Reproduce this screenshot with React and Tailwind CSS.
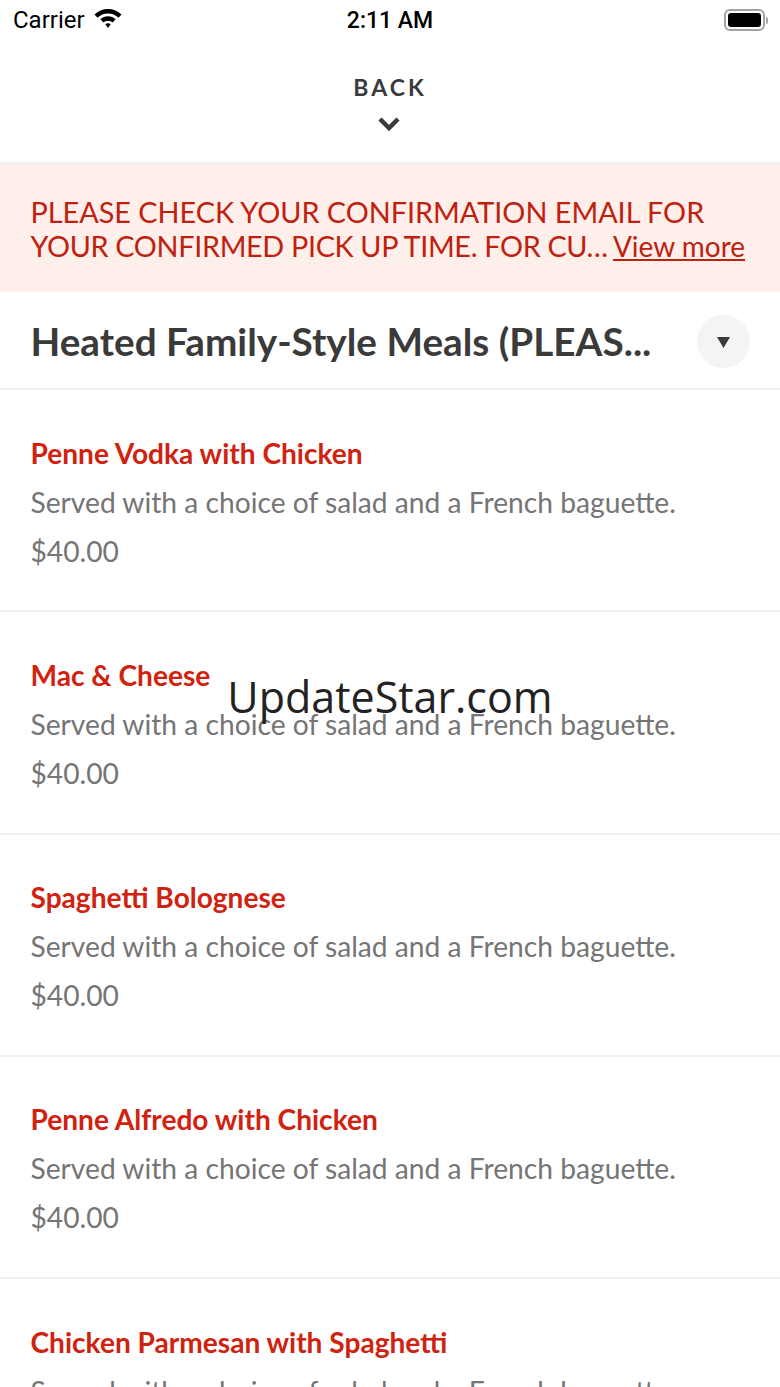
import React from 'react';

const meals = [
    'Penne Vodka with Chicken',
    'Mac & Cheese',
    'Spaghetti Bolognese',
    'Penne Alfredo with Chicken',
    'Chicken Parmesan with Spaghetti',
];

const StatusBar = () => (
    <div className="h-[40px] flex items-center justify-between pl-[13px] pr-[12px] font-['Roboto',sans-serif] text-black">
        <div className="flex items-center gap-[8px]">
            <span className="text-[24px] leading-none">Carrier</span>
            <svg className="-mt-[4px]" width="30" height="22" viewBox="0 0 30 22" fill="black">
                <path d="M15 2C9.5 2 5 4 1.500 7.500L4.500 10.800C7.300 8.100 11 6.600 15 6.600s7.700 1.500 10.500 4.200l3-3.300C25 4 20.500 2 15 2z" />
                <path d="M15 9.200c-3 0-5.600 1.100-7.600 3l3 3.300c1.200-1.100 2.800-1.800 4.600-1.800s3.400.7 4.600 1.800l3-3.300c-2-1.900-4.600-3-7.600-3z" />
                <path d="M15 16.200c-1.100 0-2 .4-2.700 1L15 21l2.700-3.800c-.7-.6-1.600-1-2.700-1z" />
            </svg>
        </div>
        <span className="absolute left-0 right-0 text-center text-[23px] leading-none font-medium">2:11 AM</span>
        <div className="flex items-center">
            <div className="w-[41px] h-[22px] rounded-[6px] border-2 border-[#a3a3a3] p-[2px]">
                <div className="w-full h-full rounded-[3px] bg-black" />
            </div>
            <div className="w-[2px] h-[7px] bg-[#a3a3a3] rounded-r-sm ml-[1px]" />
        </div>
    </div>
);

const MealRow = ({ name }) => (
    <div className="h-[222.25px] border-b-2 border-[#f1f1f1] pt-[43.500px] px-[30.500px] shrink-0">
        <div className="text-[28.100px] leading-[38px] font-bold text-[#d0220f]">{name}</div>
        <div className="text-[28.200px] leading-[38px] mt-[11px] text-[#757575]">Served with a choice of salad and a French baguette.</div>
        <div className="text-[28.200px] leading-[38px] mt-[11px] text-[#757575]">$40.00</div>
    </div>
);

export default function App() {
    return (
        <div className="relative w-[780px] h-[1387px] overflow-hidden bg-white font-['Lato',sans-serif]">
            <StatusBar />
            <div className="h-[124px] flex flex-col items-center pt-[33px] border-b-2 border-[#f1f1f1] text-[#3a3a3a]">
                <span className="text-[23px] leading-[28px] font-bold tracking-[3px]">BACK</span>
                <svg className="mt-[15px] -ml-[2px]" width="24" height="16" viewBox="0 0 24 16" fill="none" stroke="#3a3a3a" strokeWidth="4.5">
                    <path d="M3 3l9 9 9-9" />
                </svg>
            </div>
            <div className="h-[128px] bg-[#ffefeb] px-[30.500px] pt-[30.500px] text-[28.800px] leading-[34px] text-[#c0200e]">
                <div>PLEASE CHECK YOUR CONFIRMATION EMAIL FOR</div>
                <div className="whitespace-nowrap flex">
                    <span className="tracking-[-0.33px]">YOUR CONFIRMED PICK UP TIME. FOR CU…</span>
                    <span className="underline text-[28px] ml-[5px]">View more</span>
                </div>
            </div>
            <div className="h-[98px] pt-[2px] border-b-2 border-[#f1f1f1] flex items-center justify-between pl-[30.500px] pr-[30px]">
                <span className="text-[38.700px] leading-none font-bold text-[#3a3a3a] whitespace-nowrap">Heated Family-Style Meals (PLEAS...</span>
                <div className="w-[53px] h-[53px] rounded-full bg-[#f4f4f4] flex items-center justify-center">
                    <svg width="13" height="11" viewBox="0 0 13 11" fill="#3a3a3a" className="mt-[3px]">
                        <path d="M0 0h13L6.500 11z" />
                    </svg>
                </div>
            </div>
            {meals.map(meal => (
                <MealRow key={meal} name={meal} />
            ))}
            <div className="absolute left-0 right-0 top-[668px] text-center text-[43px] leading-[58px] text-[#222] font-['Open_Sans',sans-serif]">
                UpdateStar.com
            </div>
        </div>
    );
}
